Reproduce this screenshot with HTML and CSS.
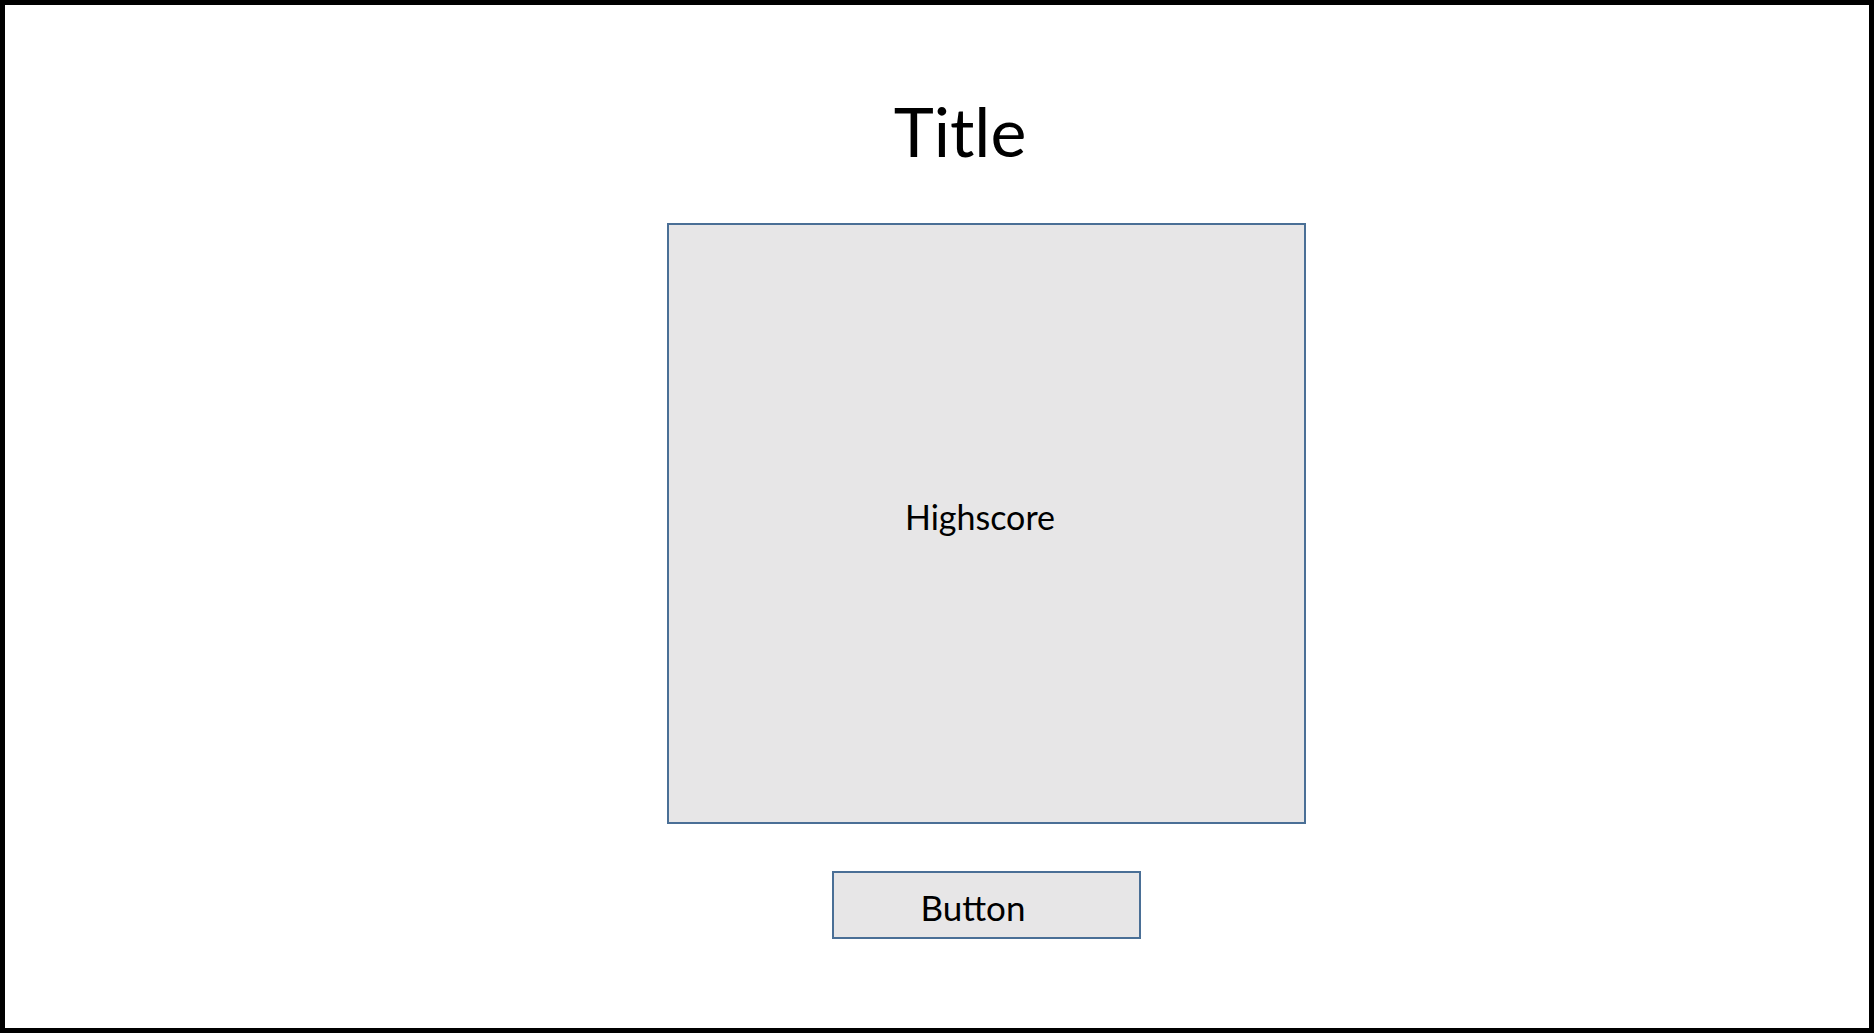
FILE: index.html
```html
<!DOCTYPE html>
<html lang="en">
<head>
    <meta charset="UTF-8">
    <meta name="viewport" content="width=device-width, initial-scale=1.0">
    <title>Title</title>
    <link rel="stylesheet" href="styles.css">
</head>
<body>
    <div class="screen">
        <h1 class="title">Title</h1>
        <div class="highscore">
            <span>Highscore</span>
        </div>
        <button class="action">Button</button>
    </div>
</body>
</html>
```
FILE: styles.css
```css
* {
    box-sizing: border-box;
}

body {
    margin: 0;
    font-family: Lato, "Open Sans", sans-serif;
    color: #000;
    background-color: #fff;
}

.screen {
    width: 1874px;
    height: 1033px;
    border: 5px solid #000;
    display: flex;
    flex-direction: column;
    align-items: center;
    padding-left: 98px;
}

.title {
    font-size: 68px;
    font-weight: 400;
    line-height: 1;
    margin: 92px 52px 0 0;
}

.highscore {
    width: 639px;
    height: 601px;
    margin-top: 58px;
    background-color: #e7e6e7;
    border: 2px solid #4a6f96;
    display: flex;
    align-items: center;
    justify-content: center;
    padding: 0 12px 14px 0;
    font-size: 34px;
}

.action {
    width: 309px;
    height: 68px;
    margin-top: 47px;
    background-color: #e7e6e7;
    border: 2px solid #4a6f96;
    font-family: inherit;
    font-size: 35px;
    color: #000;
    padding: 4px 26px 0 0;
}
```
